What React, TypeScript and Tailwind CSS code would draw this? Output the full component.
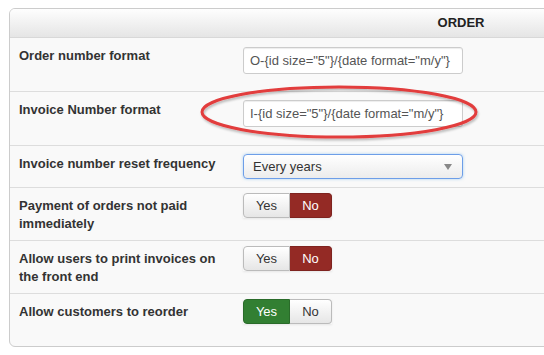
import { ReactNode } from 'react'

type Row = { label: string; pad: string; h: string; control: ReactNode }

function TextField({ value }: { value: string }) {
  return (
    <div className="w-[220px] h-[27px] rounded-[3px] border border-[#cccccc] bg-white px-[6px] flex items-center text-[13px] text-[#555555] shadow-[inset_0_1px_1px_rgba(0,0,0,0.075)] whitespace-nowrap">
      {value}
    </div>
  )
}

function Select({ value }: { value: string }) {
  return (
    <div className="w-[220px] h-[25px] rounded-[4px] border border-[#6d9ee8] bg-gradient-to-b from-white to-[#ececec] pl-[9px] pr-[10px] flex items-center justify-between text-[13px] text-[#333333] shadow-[0_0_3px_rgba(82,168,236,0.5)]">
      <span>{value}</span>
      <span className="w-0 h-0 border-l-[4px] border-r-[4px] border-t-[6px] border-l-transparent border-r-transparent border-t-[#888888]" />
    </div>
  )
}

function Toggle({ yes }: { yes: boolean }) {
  const off = 'bg-gradient-to-b from-white to-[#e6e6e6] text-[#333333] border-[#bbbbbb]'
  return (
    <div className="flex h-[25px] text-[13px] shadow-[0_1px_2px_rgba(0,0,0,0.08)]">
      <div
        className={`w-[47px] flex items-center justify-center rounded-l-[4px] border ${
          yes ? 'bg-[#327f32] text-white border-[#2a6b2a]' : off
        }`}
      >
        Yes
      </div>
      <div
        className={`w-[42px] flex items-center justify-center rounded-r-[4px] border border-l-0 ${
          yes ? off : 'bg-[#942a25] text-white border-[#7e231f]'
        }`}
      >
        No
      </div>
    </div>
  )
}

const rows: Row[] = [
  { label: 'Order number format', pad: 'pt-[9px]', h: 'h-[53px]', control: <TextField value={'O-{id size="5"}/{date format="m/y"}'} /> },
  { label: 'Invoice Number format', pad: 'pt-[8px]', h: 'h-[54px]', control: <TextField value={'I-{id size="5"}/{date format="m/y"}'} /> },
  { label: 'Invoice number reset frequency', pad: 'pt-[8px]', h: 'h-[42px]', control: <Select value="Every years" /> },
  { label: 'Payment of orders not paid immediately', pad: 'pt-[5px]', h: 'h-[53px]', control: <Toggle yes={false} /> },
  { label: 'Allow users to print invoices on the front end', pad: 'pt-[5px]', h: 'h-[53px]', control: <Toggle yes={false} /> },
  { label: 'Allow customers to reorder', pad: 'pt-[5px]', h: 'h-[53px]', control: <Toggle yes={true} /> },
]

export default function App() {
  return (
    <div className="relative w-[544px] h-[355px] overflow-hidden bg-white font-['Liberation_Sans',Arial,sans-serif]">
      <div className="ml-[9px] mt-[8px] w-[904px] rounded-[6px] border border-[#cccccc] bg-[#f9f9f9] overflow-hidden">
        <div className="h-[29px] bg-gradient-to-b from-[#fefefe] to-[#e5e5e5] border-b border-[#d8d8d8] flex items-center justify-center text-[13px] font-bold text-[#222222]">
          ORDER
        </div>
        {rows.map((r, i) => (
          <div key={r.label} className={`flex ${r.h} ${i > 0 ? 'border-t border-[#dddddd]' : ''}`}>
            <div className="w-[233px] pl-[9px] pr-[12px] pt-[9px] text-[13px] leading-[18px] font-bold text-[#333333]">
              {r.label}
            </div>
            <div className={r.pad}>{r.control}</div>
          </div>
        ))}
      </div>

      {/* highlight ring */}
      <svg className="absolute left-0 top-0 pointer-events-none" width="544" height="355">
        <defs>
          <filter id="sh" x="-10%" y="-30%" width="120%" height="160%">
            <feDropShadow dx="1" dy="2" stdDeviation="1.2" floodColor="#000" floodOpacity="0.25" />
          </filter>
        </defs>
        <ellipse cx="339" cy="112" rx="137" ry="25" fill="none" stroke="#e23c3c" strokeWidth="3" filter="url(#sh)" />
      </svg>
    </div>
  )
}
